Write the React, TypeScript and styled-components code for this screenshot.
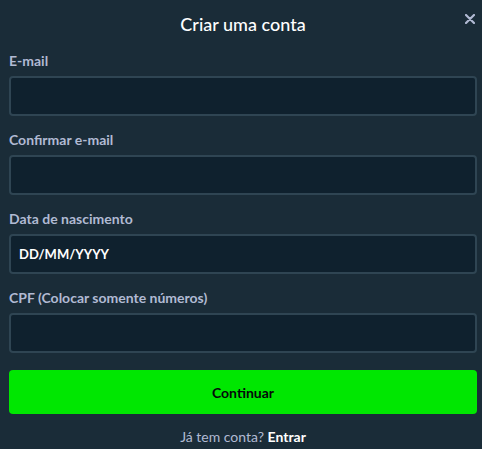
import React from "react";
import styled, { createGlobalStyle } from "styled-components";

const Global = createGlobalStyle`
  html, body { margin: 0; padding: 0; background: #1a2c38; }
  * { box-sizing: border-box; }
  body { font-family: "Lato", "Noto Sans", sans-serif; }
`;

const Modal = styled.div`
  width: 482px;
  min-height: 449px;
  background: #1a2c38;
  padding: 0 5px 0 9px;
  position: relative;
`;

const Header = styled.div`
  height: 48px;
  display: flex;
  align-items: center;
  justify-content: center;
  color: #ffffff;
  font-size: 18px;
  font-weight: 500;
`;

const Close = styled.button`
  position: absolute;
  top: 10px;
  right: 4px;
  width: 16px;
  height: 18px;
  border: none;
  background: none;
  padding: 0;
  color: #b1bad3;
  display: flex;
  align-items: center;
  justify-content: center;
`;

const Form = styled.div`
  display: flex;
  flex-direction: column;
  padding-top: 5px;
`;

const Field = styled.div`
  display: flex;
  flex-direction: column;
  margin-bottom: 16px;
  flex-shrink: 0;
`;

const Label = styled.label`
  color: #b1bad3;
  font-size: 14px;
  font-weight: 700;
  line-height: 16px;
  margin-bottom: 7px;
`;

const Input = styled.div`
  height: 40px;
  background: #0f212e;
  border: 2px solid #2f4553;
  border-radius: 4px;
  display: flex;
  align-items: center;
  padding: 0 8px;
  color: #ffffff;
  font-size: 13px;
  font-weight: 700;
`;

const Button = styled.button`
  height: 44px;
  flex-shrink: 0;
  margin-top: 1px;
  border: none;
  border-radius: 4px;
  background: #00e701;
  color: #05080a;
  font-family: inherit;
  font-size: 14px;
  font-weight: 700;
`;

const Footer = styled.div`
  text-align: center;
  margin-top: 15px;
  color: #b1bad3;
  font-size: 14px;
  line-height: 16px;
`;

const Strong = styled.span`
  color: #ffffff;
  font-weight: 700;
`;

const fields = [
  { label: "E-mail" },
  { label: "Confirmar e-mail" },
  { label: "Data de nascimento", value: "DD/MM/YYYY" },
  { label: "CPF (Colocar somente números)" },
];

export default function App() {
  return (
    <>
      <Global />
      <Modal>
        <Header>Criar uma conta</Header>
        <Close aria-label="Fechar">
          <svg width="10" height="10" viewBox="0 0 10 10">
            <path d="M1 1L9 9M9 1L1 9" stroke="currentColor" strokeWidth="2.2" strokeLinecap="round" />
          </svg>
        </Close>
        <Form>
          {fields.map((f) => (
            <Field key={f.label}>
              <Label>{f.label}</Label>
              <Input>{f.value}</Input>
            </Field>
          ))}
          <Button>Continuar</Button>
          <Footer>
            Já tem conta? <Strong>Entrar</Strong>
          </Footer>
        </Form>
      </Modal>
    </>
  );
}
